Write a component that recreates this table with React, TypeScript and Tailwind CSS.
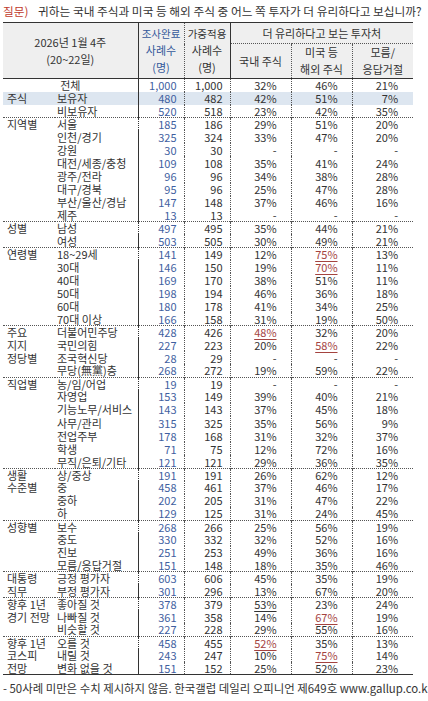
import React from 'react';

type Cell = string | { v: string; u: 'red' | 'black' };
type Row = { label: string; n1: string; n2: string; p: Cell[]; hl?: boolean };
type Group = { title: string[]; rows: Row[] };

const r = (label: string, n1: string, n2: string, a: Cell, b: Cell, c: Cell, hl = false): Row => ({
  label,
  n1,
  n2,
  p: [a, b, c],
  hl,
});
const red = (v: string): Cell => ({ v, u: 'red' });
const blk = (v: string): Cell => ({ v, u: 'black' });

const groups: Group[] = [
  {
    title: ['주식'],
    rows: [r('보유자', '480', '482', '42%', '51%', '7%', true), r('비보유자', '520', '518', '23%', '42%', '35%')],
  },
  {
    title: ['지역별'],
    rows: [
      r('서울', '185', '186', '29%', '51%', '20%'),
      r('인천/경기', '325', '324', '33%', '47%', '20%'),
      r('강원', '30', '30', '-', '-', '-'),
      r('대전/세종/충청', '109', '108', '35%', '41%', '24%'),
      r('광주/전라', '96', '96', '34%', '38%', '28%'),
      r('대구/경북', '95', '96', '25%', '47%', '28%'),
      r('부산/울산/경남', '147', '148', '37%', '46%', '16%'),
      r('제주', '13', '13', '-', '-', '-'),
    ],
  },
  {
    title: ['성별'],
    rows: [r('남성', '497', '495', '35%', '44%', '21%'), r('여성', '503', '505', '30%', '49%', '21%')],
  },
  {
    title: ['연령별'],
    rows: [
      r('18~29세', '141', '149', '12%', red('75%'), '13%'),
      r('30대', '146', '150', '19%', red('70%'), '11%'),
      r('40대', '169', '170', '38%', '51%', '11%'),
      r('50대', '198', '194', '46%', '36%', '18%'),
      r('60대', '180', '178', '41%', '34%', '25%'),
      r('70대 이상', '166', '158', '31%', '19%', '50%'),
    ],
  },
  {
    title: ['주요', '지지', '정당별'],
    rows: [
      r('더불어민주당', '428', '426', red('48%'), '32%', '20%'),
      r('국민의힘', '227', '223', '20%', red('58%'), '22%'),
      r('조국혁신당', '28', '29', '-', '-', '-'),
      r('무당(無黨)층', '268', '272', '19%', '59%', '22%'),
    ],
  },
  {
    title: ['직업별'],
    rows: [
      r('농/임/어업', '19', '19', '-', '-', '-'),
      r('자영업', '153', '149', '39%', '40%', '21%'),
      r('기능노무/서비스', '143', '143', '37%', '45%', '18%'),
      r('사무/관리', '315', '325', '35%', '56%', '9%'),
      r('전업주부', '178', '168', '31%', '32%', '37%'),
      r('학생', '71', '75', '12%', '72%', '16%'),
      r('무직/은퇴/기타', '121', '121', '29%', '36%', '35%'),
    ],
  },
  {
    title: ['생활', '수준별'],
    rows: [
      r('상/중상', '191', '191', '26%', '62%', '12%'),
      r('중', '458', '461', '37%', '46%', '17%'),
      r('중하', '202', '205', '31%', '47%', '22%'),
      r('하', '129', '125', '31%', '24%', '45%'),
    ],
  },
  {
    title: ['성향별'],
    rows: [
      r('보수', '268', '266', '25%', '56%', '19%'),
      r('중도', '330', '332', '32%', '52%', '16%'),
      r('진보', '251', '253', '49%', '36%', '16%'),
      r('모름/응답거절', '151', '148', '18%', '35%', '46%'),
    ],
  },
  {
    title: ['대통령', '직무'],
    rows: [r('긍정 평가자', '603', '606', '45%', '35%', '19%'), r('부정 평가자', '301', '296', '13%', '67%', '20%')],
  },
  {
    title: ['향후 1년', '경기 전망'],
    rows: [
      r('좋아질 것', '378', '379', blk('53%'), '23%', '24%'),
      r('나빠질 것', '361', '358', '14%', red('67%'), '19%'),
      r('비슷할 것', '227', '228', '29%', '55%', '16%'),
    ],
  },
  {
    title: ['향후 1년', '코스피', '전망'],
    rows: [
      r('오를 것', '458', '455', red('52%'), '35%', '13%'),
      r('내릴 것', '243', '247', '10%', red('75%'), '14%'),
      r('변화 없을 것', '151', '152', '25%', '52%', '23%'),
    ],
  },
];

function Pct({ c }: { c: Cell }) {
  if (typeof c === 'string') return <>{c}</>;
  return (
    <span
      className={
        c.u === 'red'
          ? 'text-[#a4433f] underline decoration-[#a4433f] underline-offset-2'
          : 'underline underline-offset-2'
      }
    >
      {c.v}
    </span>
  );
}

function BodyRow({ group, row, first }: { group?: string; row: Row; first: boolean }) {
  const top = first ? 'border-t border-dotted border-t-[#555]' : '';
  return (
    <tr className={`${first ? 'h-[12.1px]' : 'h-[13.1px]'} ${row.hl ? 'bg-[#dde6f0]' : ''}`}>
      <td className={`${top} p-0 pl-[4px] whitespace-nowrap`}>{group ?? ''}</td>
      <td className={`${top} p-0 pl-[2px] whitespace-nowrap border-r border-r-[#333]`}>{row.label}</td>
      <td className={`${top} p-0 pr-[7px] text-right text-[#3f5f9f] border-r border-dotted border-r-[#555]`}>{row.n1}</td>
      <td className={`${top} p-0 pr-[7px] text-right border-r border-dotted border-r-[#555]`}>{row.n2}</td>
      <td className={`${top} p-0 pr-[14px] text-right border-r border-dotted border-r-[#555]`}>
        <Pct c={row.p[0]} />
      </td>
      <td className={`${top} p-0 pr-[14px] text-right border-r border-dotted border-r-[#555]`}>
        <Pct c={row.p[1]} />
      </td>
      <td className={`${top} p-0 pr-[15px] text-right`}>
        <Pct c={row.p[2]} />
      </td>
    </tr>
  );
}

export default function App() {
  return (
    <div
      className="w-[428px] h-[701px] overflow-hidden bg-white text-[#333] text-[11px]"
      style={{ fontFamily: '"Noto Sans CJK KR", "Noto Sans", sans-serif' }}
    >
      <div className="h-[22px] flex items-center pl-[3px] whitespace-nowrap text-[11.7px]">
        <span className="text-[#c0392b] w-[35px]">질문)</span>
        <span>귀하는 국내 주식과 미국 등 해외 주식 중 어느 쪽 투자가 더 유리하다고 보십니까?</span>
      </div>

      <table className="ml-[3px] w-[410px] table-fixed border-collapse leading-[12px]">
        <colgroup>
          <col className="w-[52px]" />
          <col className="w-[83px]" />
          <col className="w-[46px]" />
          <col className="w-[46px]" />
          <col className="w-[61px]" />
          <col className="w-[61px]" />
          <col className="w-[61px]" />
        </colgroup>
        <thead className="bg-[#efefef]">
          <tr className="h-[21px] border-t border-t-[#333]">
            <th colSpan={2} rowSpan={2} className="p-0 font-normal border-r border-r-[#333] leading-[17px]">
              <div>2026년 1월 4주</div>
              <div>(20~22일)</div>
            </th>
            <th rowSpan={2} className="p-0 font-normal text-[10.5px] text-[#34589a] leading-[17px] border-r border-dotted border-r-[#555]">
              <div>조사완료</div>
              <div className="text-[11px]">사례수</div>
              <div className="text-[11px]">(명)</div>
            </th>
            <th rowSpan={2} className="p-0 font-normal text-[10.5px] leading-[17px] border-r border-r-[#333]">
              <div>가중적용</div>
              <div className="text-[11px]">사례수</div>
              <div className="text-[11px]">(명)</div>
            </th>
            <th colSpan={3} className="p-0 font-normal border-b border-dotted border-b-[#555]">
              더 유리하다고 보는 투자처
            </th>
          </tr>
          <tr className="h-[34px] border-b border-b-[#333]">
            <th className="p-0 font-normal border-r border-dotted border-r-[#555]">국내 주식</th>
            <th className="p-0 font-normal leading-[17px] border-r border-dotted border-r-[#555]">
              <div>미국 등</div>
              <div>해외 주식</div>
            </th>
            <th className="p-0 font-normal leading-[17px]">
              <div>모름/</div>
              <div>응답거절</div>
            </th>
          </tr>
        </thead>
        <tbody className="border-b border-b-[#333]">
          <tr className="h-[13.1px]">
            <td colSpan={2} className="p-0 text-center border-r border-r-[#333]">전체</td>
            <td className="p-0 pr-[7px] text-right text-[#3f5f9f] border-r border-dotted border-r-[#555]">1,000</td>
            <td className="p-0 pr-[7px] text-right border-r border-dotted border-r-[#555]">1,000</td>
            <td className="p-0 pr-[14px] text-right border-r border-dotted border-r-[#555]">32%</td>
            <td className="p-0 pr-[14px] text-right border-r border-dotted border-r-[#555]">46%</td>
            <td className="p-0 pr-[15px] text-right">21%</td>
          </tr>
          {groups.map((g, gi) =>
            g.rows.map((row, ri) => (
              <BodyRow key={`${gi}-${ri}`} group={g.title[ri]} row={row} first={ri === 0 && gi > 0} />
            ))
          )}
        </tbody>
      </table>

      <div className="mt-[5px] pl-[3px] whitespace-nowrap text-[11.4px]">
        - 50사례 미만은 수치 제시하지 않음. 한국갤럽 데일리 오피니언 제649호 www.gallup.co.kr
      </div>
    </div>
  );
}
